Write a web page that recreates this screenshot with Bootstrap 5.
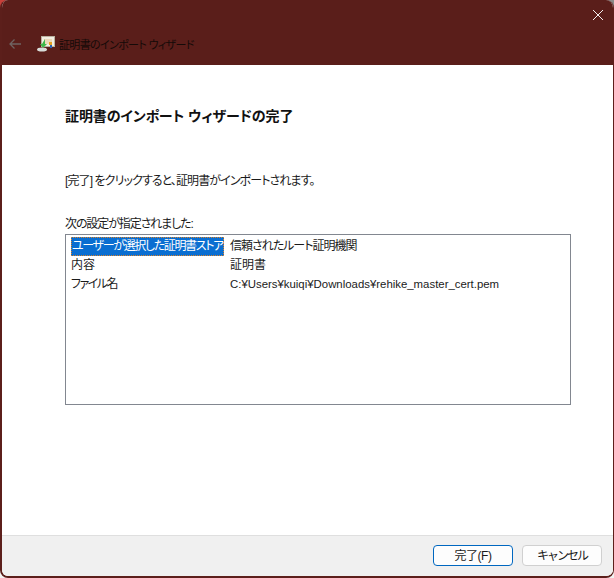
<!DOCTYPE html>
<html lang="ja">
<head>
    <meta charset="UTF-8" />
    <meta name="viewport" content="width=device-width, initial-scale=1" />
    <title>証明書のインポート ウィザード</title>
    <link href="https://cdn.jsdelivr.net/npm/bootstrap@5.3.0/dist/css/bootstrap.min.css" rel="stylesheet" />
    <style>
        html, body {
            height: 100%;
        }

        body {
            font-family: "Liberation Sans", "Noto Sans CJK JP", sans-serif;
            font-size: 12px;
            line-height: 16px;
            color: #1a1a1a;
            overflow: hidden;
            font-feature-settings: "palt";
            /* desktop showing through the rounded corners */
            background:
                linear-gradient(90deg, #c8403a 50%, #8a8a8a 50%) top / 100% 50% no-repeat,
                #f2f2f2;
        }

        .wizard-window {
            height: 578px;
            border: solid #5c1f1b;
            border-width: 0 1px 2px 2px;
            border-radius: 8px;
            background: #fff;
            overflow: hidden;
        }

        .title-strip {
            height: 65px;
            background: #5a1e1a;
            margin: 0 -1px 0 -2px;
        }

        .close-x {
            top: 9px;
            right: 9px;
            width: 12px;
            height: 12px;
        }

        .back-arrow {
            width: 14px;
            height: 12px;
            margin-left: 8px;
            margin-right: 15px;
            margin-bottom: 7px;
        }

        .cert-icon {
            margin-bottom: 5px;
        }

        .title-text {
            color: #150a08;
            font-size: 11px;
            letter-spacing: -0.65px;
            margin-left: 4px;
            margin-bottom: 4px;
        }

        .wizard-body {
            padding: 41px 41px 0 63px;
        }

        .wizard-heading {
            font-size: 14px;
            line-height: 20px;
            font-weight: 700;
            color: #111;
            letter-spacing: -0.1px;
            margin: 0 0 47px;
        }

        .intro-line {
            letter-spacing: -0.9px;
            margin-bottom: 27px;
        }

        .given-label {
            letter-spacing: -1.1px;
        }

        .settings-box {
            width: 506px;
            height: 171px;
            border: 1px solid #828790;
            padding: 1px 5px;
            margin-top: 2px;
        }

        .settings-row {
            height: 19px;
            line-height: 20px;
        }

        .key-cell {
            width: 159px;
            white-space: nowrap;
        }

        .trust-text {
            letter-spacing: -1px;
        }

        .file-key {
            letter-spacing: -1.5px;
        }

        .path-text {
            font-size: 11.4px;
        }

        .key-sel {
            background: #0a6ed1;
            color: #fff;
            outline: 1px dotted #d9822b;
            outline-offset: -1px;
            padding: 0 1px;
            display: inline-block;
            height: 19px;
            line-height: 19px;
            letter-spacing: -1.35px;
        }

        .wizard-foot {
            height: 41px;
            background: #f0f0f0;
            border-top: 1px solid #dfdfdf;
            padding: 9px 11px 0 0;
            gap: 9px;
        }

        .foot-btn {
            width: 80px;
            height: 21px;
            padding: 0;
            font-size: 12px;
            line-height: 18px;
            color: #1a1a1a;
            background: #fdfdfd;
            border: 1px solid #d0d0d0;
            border-radius: 4px;
        }

        .foot-btn-main {
            border: 1px solid #0067c0;
            letter-spacing: -0.5px;
        }

        .foot-btn-cancel {
            letter-spacing: -2px;
        }
    </style>
</head>
<body>

    <div class="wizard-window d-flex flex-column position-relative">
        <div class="title-strip d-flex align-items-end pb-2 flex-shrink-0">
            <svg class="back-arrow" viewBox="0 0 14 12">
                <path d="M13 6H2M6.500 1.500 2 6l4.500 4.500" fill="none" stroke="#6f6361" stroke-width="1.300" />
            </svg>
            <svg class="cert-icon" width="18" height="16" viewBox="0 0 18 16">
                <rect x="4.500" y="0.500" width="13" height="10" fill="#f2eee2" stroke="#b9b2a0" />
                <rect x="7" y="3" width="8" height="5" fill="#e9d8b8" />
                <rect x="12" y="6" width="3" height="3" fill="#e8a020" />
                <rect x="13" y="9" width="2" height="3" fill="#2a5fb0" />
                <path d="M8 3 5 8H3l3 4 4-4H8z" fill="#3fb84a" />
                <ellipse cx="5" cy="13.500" rx="5" ry="2" fill="#d8dcd8" />
            </svg>
            <span class="title-text">証明書のインポート ウィザード</span>
        </div>

        <svg class="close-x position-absolute" viewBox="0 0 12 12">
            <path d="M1 1l10 10M11 1 1 11" stroke="#f4eeee" stroke-width="1" fill="none" />
        </svg>

        <div class="wizard-body flex-grow-1">
            <h1 class="wizard-heading">証明書のインポート ウィザードの完了</h1>
            <p class="intro-line">[完了] をクリックすると、証明書がインポートされます。</p>
            <div class="given-label">次の設定が指定されました:</div>
            <div class="settings-box">
                <div class="settings-row d-flex">
                    <div class="key-cell"><span class="key-sel">ユーザーが選択した証明書ストア</span></div>
                    <div class="trust-text">信頼されたルート証明機関</div>
                </div>
                <div class="settings-row d-flex">
                    <div class="key-cell">内容</div>
                    <div>証明書</div>
                </div>
                <div class="settings-row d-flex">
                    <div class="key-cell file-key">ファイル名</div>
                    <div class="path-text">C:¥Users¥kuiqi¥Downloads¥rehike_master_cert.pem</div>
                </div>
            </div>
        </div>

        <div class="wizard-foot d-flex justify-content-end flex-shrink-0">
            <button type="button" class="btn foot-btn foot-btn-main">完了(F)</button>
            <button type="button" class="btn foot-btn foot-btn-cancel">キャンセル</button>
        </div>
    </div>

</body>
</html>
